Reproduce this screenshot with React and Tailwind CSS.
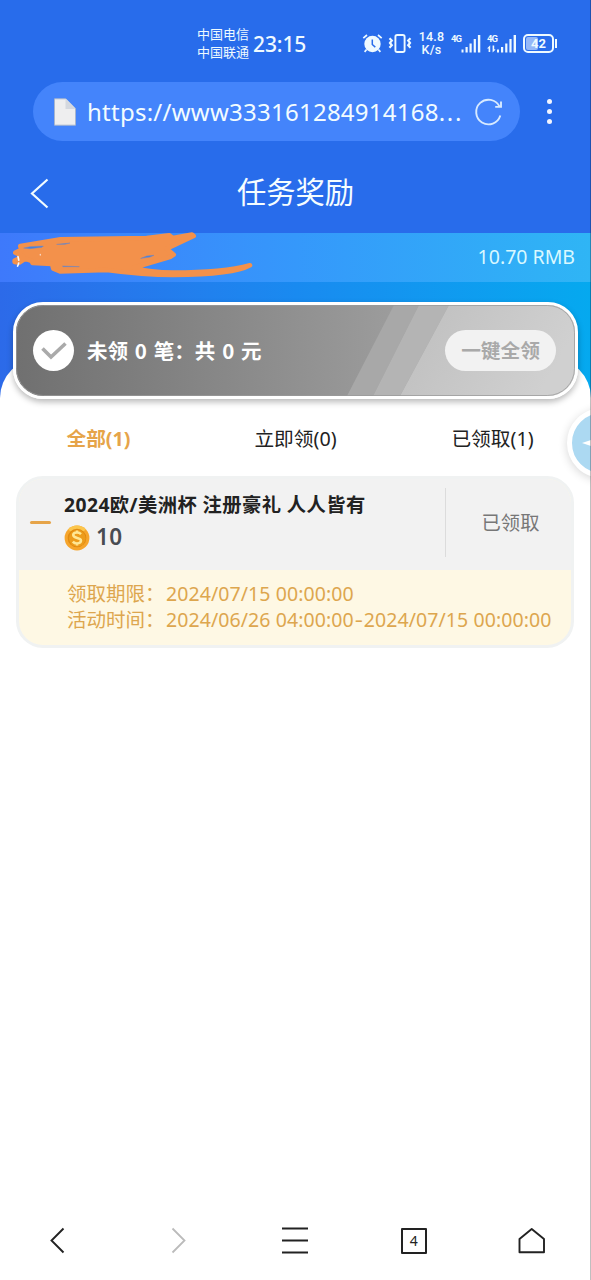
import React from "react";

function StatusBar() {
  return (
    <div className="flex h-[82px] pt-[24px] text-[#effaff]">
      <div className="ml-[197px] w-[56px] shrink-0 text-[13px] leading-[18px] pt-[1px] whitespace-nowrap">
        <div>中国电信</div>
        <div>中国联通</div>
      </div>
      <div className="w-[109px] shrink-0 text-[21px] font-medium leading-[40px] tracking-[-0.1px]">23:15</div>
      <svg className="mt-[9px] h-[21px] w-[21px] shrink-0" viewBox="0 0 21 21" fill="none" stroke="currentColor">
        <circle cx="10.5" cy="11" r="8.2" fill="currentColor" stroke="none" />
        <path d="M1.3 5.2 5 2M19.7 5.2 16 2M4.6 16.500l-2 2.400M16.400 16.500l2 2.400" strokeWidth="1.700" />
        <path d="M10.300 6.500v5l3 2.600" stroke="#286ceb" strokeWidth="1.500" />
      </svg>
      <svg className="ml-[5px] mt-[9px] h-[21px] w-[24px] shrink-0" viewBox="0 0 24 21" fill="none" stroke="currentColor">
        <rect x="7.400" y="2" width="9.200" height="17" rx="1.800" strokeWidth="1.900" />
        <path d="M1.500 5.200l2.300 2.300-1.800 2.400 1.800 2.400-2.300 2.500M22.500 5.200l-2.300 2.300 1.800 2.400-1.800 2.400 2.300 2.500" strokeWidth="2.200" />
      </svg>
      <div className="ml-[3px] mt-[7px] w-[33px] shrink-0 text-center font-['Roboto',sans-serif] text-[12.500px] font-medium tracking-[0.2px] whitespace-nowrap">
        <div className="h-[12px] leading-[12px]">14.8</div>
        <div className="h-[13px] leading-[13px]">K/s</div>
      </div>
      <svg className="ml-[3px] mt-[9px] h-[22px] w-[68px] shrink-0" viewBox="0 0 68 22" fill="currentColor">
        <text x="0" y="9" fontSize="9.500" fontWeight="700" textLength="11" fontFamily="Roboto, sans-serif">4G</text>
        <path d="M10.500 16.500h2v3h-2zM14.500 14h2.200v5.500h-2.200zM18.500 10.500h2.200v9h-2.200zM22.700 6h2.200v13.500h-2.200zM26.900 2h2.400v17.500h-2.400z" />
        <text x="36" y="9" fontSize="9.500" fontWeight="700" textLength="11" fontFamily="Roboto, sans-serif">4G</text>
        <path d="M46 16.500h2v3h-2zM50 14h2.200v5.500H50zM54.200 10.500h2.200v9h-2.200zM58.400 6h2.200v13.500h-2.200zM62.600 2H65v17.500h-2.400z" />
        <path d="M36.200 15.200l3-3V19h-1.600v-3.500h-1.400zM44.600 16.500l-3 3v-7h1.600v3.700z" />
      </svg>
      <div className="mt-[10px] ml-[4px] flex h-[19px] w-[36px] shrink-0 items-center">
        <div className="relative flex h-[19px] w-[31px] items-center justify-center rounded-[5px] border-2 border-current">
          <div className="absolute left-[1px] top-[1px] h-[13px] w-[12px] rounded-[2px] bg-[#94b8f8]" />
          <span className="relative font-['Roboto',sans-serif] text-[13px] font-bold leading-none">42</span>
        </div>
        <div className="ml-[1px] h-[9px] w-[2px] bg-current" />
      </div>
    </div>
  );
}

function AddressBar() {
  return (
    <div className="flex h-[59px] items-center pl-[33px] text-[#f2fcff]">
      <div className="flex h-[59px] w-[487px] shrink-0 items-center rounded-full bg-[#4484fb] pl-[20px]">
        <svg className="h-[28px] w-[24px] shrink-0" viewBox="0 0 24 28">
          <path d="M1.5 .8h12L22.5 10v17.2h-21z" fill="#eeeeef" stroke="#a7b4cb" strokeWidth=".9" />
          <path d="M12.5 1v10h10z" fill="#d4d8df" />
          <path d="M12.5 0 23.5 11V0z" fill="#4484fb" />
        </svg>
        <span className="ml-[10px] w-[378px] shrink-0 whitespace-nowrap text-[24px] leading-[36px] tracking-[0.250px]">https://www333161284914168<span className="tracking-[1.700px]">...</span></span>
        <svg className="ml-[9px] h-[30px] w-[30px] shrink-0" viewBox="0 0 30 30" fill="none" stroke="#d7eaff" strokeWidth="1.900">
          <path d="M26.300 18.500A12.300 12.300 0 1 1 25.500 9.500" />
          <path d="M27 4.500v5.400h-5.800" />
        </svg>
      </div>
      <div className="ml-[27px] flex flex-col gap-[5px]">
        <i className="h-[5px] w-[5px] rounded-full bg-[#f2f5ff]" />
        <i className="h-[5px] w-[5px] rounded-full bg-[#f2f5ff]" />
        <i className="h-[5px] w-[5px] rounded-full bg-[#f2f5ff]" />
      </div>
    </div>
  );
}

function BalanceBand() {
  return (
    <div className="flex h-[49px] items-center justify-between bg-gradient-to-r from-[#3e79fb] via-[#3598fb] to-[#2fb5f5] pr-[16px]">
      <svg className="h-[49px] w-[260px] overflow-visible" viewBox="0 9 780 147" fill="none" strokeLinecap="round" strokeLinejoin="round">
        <path d="M46 68 64 60 61 48 182 28 440 24 508 16 518 24 576 14 581 18 500 56 521 74 512 80 400 113 Q450 127 520 128 Q670 128 750 106 Q700 134 520 135 Q430 135 320 120L180 124 160 116 156 102 98 99 94 92 76 86 58 98 44 96 44 92 70 79z" fill="#f3914b" stroke="#f3914b" strokeWidth="14" />
        <path d="M54 80Q60 100 51 111" stroke="#f5f9ff" strokeWidth="5" strokeDasharray="10 9" />
        <path d="M121 73v2" stroke="#f8d9c4" strokeWidth="4" />
        <path d="M72 54 90 50 130 48 126 52 90 56zM171 43 210 39 195 43zM188 108 238 110 190 110zM423 85 440 78 462 76 450 81z" fill="#3f82e8" stroke="#7a86b6" strokeWidth="1.500" />
      </svg>
      <span className="pb-[2px] text-[19.500px] leading-[30px] text-[#d9f8ff] whitespace-nowrap">10.70 RMB</span>
    </div>
  );
}

function ClaimCard() {
  return (
    <div className="relative mx-[13px] h-[97px] w-[565px] overflow-hidden rounded-[30px] border-[3px] border-white bg-gradient-to-r from-[#707070] to-[#b2b2b2] shadow-[0_3px_6px_rgba(0,0,0,0.28)]">
      <svg className="absolute inset-0 h-full w-full" viewBox="0 0 559 91" preserveAspectRatio="none">
        <defs>
          <linearGradient id="sheen" x1="0" x2="1" y1="0" y2=".3">
            <stop offset="0" stopColor="#bebebe" />
            <stop offset="1" stopColor="#d0d0d0" />
          </linearGradient>
        </defs>
        <path d="M378 0H403L357 91H331z" fill="#a8a8a8" />
        <path d="M403 0H433L384 91H357z" fill="#b4b4b4" />
        <path d="M433 0H559V91H384z" fill="url(#sheen)" />
        <rect x=".5" y=".5" width="558" height="90" rx="27" fill="none" stroke="#999" strokeOpacity=".75" />
      </svg>
      <div className="relative flex h-full items-center pl-[17px] pr-[19px]">
        <span className="flex h-[41px] w-[41px] items-center justify-center rounded-full bg-white">
          <svg className="h-[20px] w-[26px]" viewBox="0 0 26 20" fill="none" stroke="#aaa" strokeWidth="3.600">
            <path d="M1.500 7.500 10 16 24.500 2.500" />
          </svg>
        </span>
        <span className="ml-[13px] whitespace-nowrap pb-[2px] font-['Noto_Sans_CJK_SC',sans-serif] text-[20.500px] font-bold leading-[30px] text-white [word-spacing:2.200px]">未领 0 笔：共 0 元</span>
        <button className="ml-auto h-[41px] w-[111px] rounded-full bg-[#f2f2f2] pb-[2px] font-['Noto_Sans_CJK_SC',sans-serif] text-[19.700px] font-bold text-[#a9a9a9]">一键全领</button>
      </div>
    </div>
  );
}

function Coin() {
  return (
    <svg className="h-[26px] w-[26px]" viewBox="0 0 26 26">
      <circle cx="13" cy="13" r="12.400" fill="#f6a52c" />
      <path d="M4.200 4.200A12.400 12.400 0 0 1 21.800 4.200L13 13z" fill="#fcc64c" />
      <circle cx="13" cy="13" r="9.300" fill="#e08a12" />
      <circle cx="13.300" cy="13.300" r="8.300" fill="#ed9c1c" />
      <path d="M17 9.200c-1.100-1.200-2.400-1.700-4-1.700-2.200 0-3.800.9-3.800 2.600 0 3.800 7.800 1.900 7.800 5.500 0 1.800-1.700 2.800-4 2.800-1.800 0-3.200-.6-4.200-1.800M13 5.600v2M13 18.400v2.200" fill="none" stroke="#ffe795" strokeWidth="2.500" />
    </svg>
  );
}

function RewardItem() {
  return (
    <div className="mx-[16px] h-[172px] w-[558px] overflow-hidden rounded-[27px] border-[3px] border-[#f0f2f2] bg-[#fef8e4]">
      <div className="flex h-[91px] bg-[#f2f2f2]">
        <div className="flex w-[45px] shrink-0 items-center pl-[11px]">
          <i className="mt-[-4px] h-[3px] w-[21px] rounded-full bg-[#e6a449]" />
        </div>
        <div className="w-[381px] shrink-0 pt-[11px]">
          <div className="whitespace-nowrap text-[19.300px] font-bold leading-[30px] tracking-[0.430px] text-[#222]">2024欧/美洲杯 注册豪礼 人人皆有</div>
          <div className="mt-[3px] flex h-[30px] items-center">
            <Coin />
            <span className="ml-[6px] pb-[2px] text-[22.500px] font-semibold leading-[28px] tracking-[0.300px] text-[#494c52]">10</span>
          </div>
        </div>
        <div className="mt-[9px] h-[69px] w-px bg-[#dcdcdc]" />
        <div className="flex flex-1 items-center justify-center pb-[3px] pl-[4px] text-[19.300px] text-[#777]">已领取</div>
      </div>
      <div className="pl-[48px] pt-[11px] text-[19.500px] leading-[26px] text-[#dda64e] whitespace-nowrap">
        <div className="flex"><span className="w-[99px]">领取期限：</span><span className="tracking-[0.080px]">2024/07/15 00:00:00</span></div>
        <div className="flex"><span className="w-[99px]">活动时间：</span><span className="tracking-[0.080px]">2024/06/26 04:00:00<span className="inline-block w-[10px] scale-x-[1.300] text-center">-</span>2024/07/15 00:00:00</span></div>
      </div>
    </div>
  );
}

function BottomNav() {
  return (
    <nav className="grid h-[80px] w-[591px] grid-cols-5 items-center justify-items-center text-[#222]">
      <svg className="h-[28px] w-[28px]" viewBox="0 0 28 28" fill="none" stroke="currentColor" strokeWidth="1.900"><path d="M18.500 2.500 6.500 14.500l12 12" /></svg>
      <svg className="h-[28px] w-[28px]" viewBox="0 0 28 28" fill="none" stroke="#bbb" strokeWidth="1.800"><path d="M9.500 2.500l12 12-12 12" /></svg>
      <svg className="h-[28px] w-[28px]" viewBox="0 0 28 28" stroke="currentColor" strokeWidth="2"><path d="M1 2.500h26M1 14.500h26M1 26.500h26" /></svg>
      <div className="mt-[1px] flex h-[26px] w-[26px] items-center justify-center rounded-[1px] border-2 border-[#222] text-[14px] leading-none">4</div>
      <svg className="h-[28px] w-[28px]" viewBox="0 0 28 28" fill="none" stroke="currentColor" strokeWidth="1.900" strokeLinejoin="round"><path d="M1.500 26.200V13L13.700 3l12.300 10v13.200z" /></svg>
    </nav>
  );
}

export default function App() {
  return (
    <div className="relative flex h-[1280px] w-[591px] flex-col overflow-hidden bg-white font-['Noto_Sans','Noto_Sans_CJK_SC',sans-serif]">
      <div className="h-[233px] shrink-0 bg-[#286ceb]">
        <StatusBar />
        <AddressBar />
        <div className="flex h-[92px] items-center pt-[10px]">
          <svg className="ml-[29px] mt-[2px] h-[32px] w-[20px]" viewBox="0 0 20 32" fill="none" stroke="#f2fcff" strokeWidth="2.200"><path d="M18.500 2.500 3 16.500l15.500 14" /></svg>
          <h1 className="mr-[49px] flex-1 text-center text-[29.300px] leading-[40px] text-[#f5fdff]">任务奖励</h1>
        </div>
      </div>
      <div className="shrink-0 bg-gradient-to-r from-[#2c6ae9] via-[#198af0] to-[#05a9ef]">
        <BalanceBand />
        <div className="h-[76px] pt-[20px]">
          <ClaimCard />
        </div>
        <div className="h-[42px] rounded-t-[40px] bg-white" />
      </div>
      <div className="grid h-[76px] w-[591px] shrink-0 grid-cols-3 items-center pt-[2px] text-center text-[19.700px] text-[#222]">
        <span className="font-bold text-[#e6a449]">全部(1)</span>
        <span>立即领(0)</span>
        <span>已领取(1)</span>
      </div>
      <RewardItem />
      <div className="flex-1" />
      <BottomNav />
      <div className="absolute left-[567px] top-[408px] flex h-[70px] w-[70px] items-center rounded-full border-[5px] border-white bg-[#acd9f2] shadow-[0_2px_10px_rgba(0,0,0,0.16)]">
        <svg className="ml-[10px] h-[12px] w-[22px]" viewBox="0 0 22 12"><path d="M0 6 9 3l13-3v12L9 9z" fill="white" /></svg>
      </div>
      <div className="absolute right-0 top-0 h-full w-px bg-black/25" />
    </div>
  );
}
